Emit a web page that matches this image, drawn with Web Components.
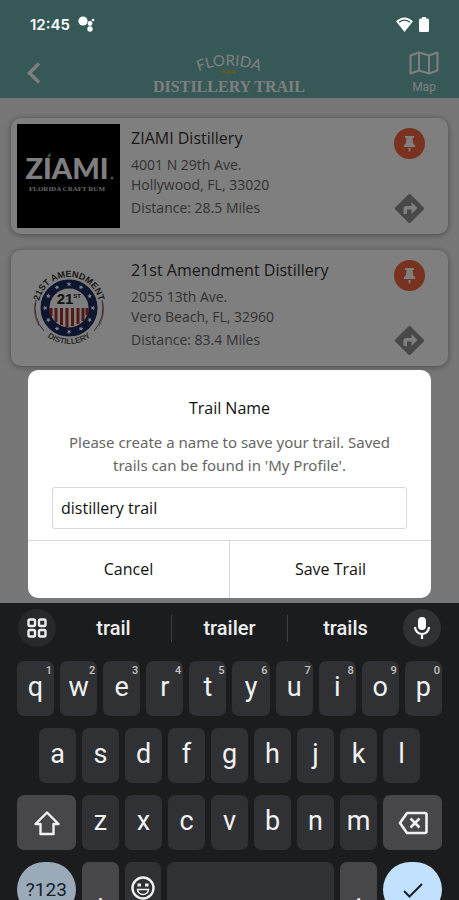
<!DOCTYPE html>
<html lang="en">
<head>
  <meta charset="UTF-8">
  <meta name="viewport" content="width=device-width, initial-scale=1">
  <title>Florida Distillery Trail</title>
  <style>
    body {
      margin: 0;
      font-family: "Open Sans", "Noto Sans", sans-serif;
    }
  </style>
</head>
<body>
  <phone-screen>
    <status-bar slot="status">12:45</status-bar>
    <trail-header></trail-header>
    <main>
      <distillery-card>
        <ziami-logo slot="logo"></ziami-logo>
        <span slot="name">ZIAMI Distillery</span>
        <span slot="street">4001 N 29th Ave.</span>
        <span slot="city">Hollywood, FL, 33020</span>
        <span slot="distance">Distance: 28.5 Miles</span>
      </distillery-card>
      <distillery-card>
        <amendment-logo slot="logo"></amendment-logo>
        <span slot="name">21st Amendment Distillery</span>
        <span slot="street">2055 13th Ave.</span>
        <span slot="city">Vero Beach, FL, 32960</span>
        <span slot="distance">Distance: 83.4 Miles</span>
      </distillery-card>
    </main>
    <name-dialog slot="dialog">
      <span slot="title">Trail Name</span>
      Please create a name to save your trail. Saved trails can be found in 'My Profile'.
    </name-dialog>
    <soft-keyboard slot="keyboard"></soft-keyboard>
  </phone-screen>

  <script>
    class PhoneScreen extends HTMLElement {
      connectedCallback() {
        this.attachShadow({ mode: 'open' });
        this.shadowRoot.innerHTML = `
          <style>
            :host {
              display: flex;
              flex-direction: column;
              height: 100vh;
              overflow: hidden;
            }
            .app {
              flex: 1;
              min-height: 0;
              position: relative;
              background: #efefef;
              overflow: hidden;
            }
            .overlay {
              position: absolute;
              inset: 0;
              display: flex;
              align-items: flex-end;
              padding: 0 28px 5px;
              background: rgba(0, 0, 0, 0.5);
            }
            .status {
              position: absolute;
              inset: 0 0 auto;
            }
            ::slotted(main) {
              display: flex;
              flex-direction: column;
              gap: 16px;
              padding: 20px 11px;
            }
            ::slotted(name-dialog) { flex: 1; }
            ::slotted(soft-keyboard) { flex: 0 0 33vh; }
          </style>
          <div class="app">
            <slot></slot>
            <div class="overlay"><slot name="dialog"></slot></div>
            <div class="status"><slot name="status"></slot></div>
          </div>
          <slot name="keyboard"></slot>
        `;
      }
    }
    customElements.define('phone-screen', PhoneScreen);

    class StatusBar extends HTMLElement {
      connectedCallback() {
        this.attachShadow({ mode: 'open' });
        this.shadowRoot.innerHTML = `
          <style>
            :host {
              display: flex;
              align-items: center;
              gap: 8px;
              height: 48px;
              padding: 0 30px;
              color: #fff;
              font: 600 15px Inter, sans-serif;
            }
            .right {
              display: flex;
              align-items: center;
              gap: 6px;
              margin-left: auto;
            }
            svg { display: block; }
          </style>
          <span><slot></slot></span>
          <svg width="17" height="16" viewBox="0 0 17 16" fill="#fff">
            <circle cx="5" cy="5" r="4.6"/>
            <circle cx="12" cy="7.5" r="2.4"/>
            <circle cx="15" cy="4" r="1.3"/>
            <circle cx="12" cy="13" r="2.7"/>
          </svg>
          <div class="right">
            <svg width="17" height="15" viewBox="0 0 17 15">
              <path d="M0 4.2Q8.5-3.4 17 4.2L8.5 15Z" fill="#fff"/>
              <path d="M3 5.2Q8.5 1 14 5.2" fill="none" stroke="#365856" stroke-width="1.3"/>
            </svg>
            <svg width="10" height="15" viewBox="0 0 10 15" fill="#fff">
              <path d="M3 0h4v1.5h1.500A1.500 1.500 0 0 1 10 3v10.500A1.500 1.500 0 0 1 8.500 15h-7A1.500 1.500 0 0 1 0 13.500V3a1.500 1.500 0 0 1 1.500-1.500H3z"/>
            </svg>
          </div>
        `;
      }
    }
    customElements.define('status-bar', StatusBar);

    class TrailHeader extends HTMLElement {
      connectedCallback() {
        this.attachShadow({ mode: 'open' });
        this.shadowRoot.innerHTML = `
          <style>
            :host {
              display: grid;
              grid-template-columns: 1fr auto 1fr;
              align-items: center;
              padding: 48px 20px 0 18px;
              height: 50px;
              background: #6cb0ac;
              color: #fff;
            }
            button, a {
              display: flex;
              flex-direction: column;
              align-items: center;
              gap: 4px;
              color: inherit;
              font: 12px/16px Roboto, sans-serif;
              text-decoration: none;
            }
            button {
              justify-self: start;
              padding: 4px 8px;
              border: 0;
              background: none;
            }
            a { justify-self: end; }
            svg { display: block; }
          </style>
          <button type="button" aria-label="Back">
            <svg width="16" height="22" viewBox="0 0 16 22" fill="none" stroke="currentColor" stroke-width="3.400">
              <path d="M13 1.500L3.500 11l9.500 9.500"/>
            </svg>
          </button>
          <svg width="152" height="46" viewBox="0 0 152 46" fill="currentColor" role="img" aria-label="Florida Distillery Trail">
            <path id="arc" d="M37 25Q76 6 115 25" fill="none"/>
            <text font-family="Lato, sans-serif" font-size="15" font-weight="400" text-anchor="middle">
              <textPath href="#arc" startOffset="50%">FLORIDA</textPath>
            </text>
            <g fill="#e6b422">
              <circle cx="71" cy="22" r="1.700"/><circle cx="76" cy="22" r="1.700"/><circle cx="81" cy="22" r="1.700"/>
            </g>
            <text x="76" y="42" font-family="'Liberation Serif', serif" font-size="16" font-weight="700" text-anchor="middle">DISTILLERY TRAIL</text>
          </svg>
          <a href="#map">
            <svg width="30" height="24" viewBox="0 0 30 24" fill="none" stroke="currentColor" stroke-width="2" stroke-linejoin="round">
              <path d="M1.500 4.500L10 1.500l10 3 8.500-3v18L20 22.500l-10-3-8.500 3zM10 1.500v18M20 4.500v18"/>
            </svg>
            Map
          </a>
        `;
      }
    }
    customElements.define('trail-header', TrailHeader);

    class DistilleryCard extends HTMLElement {
      connectedCallback() {
        this.attachShadow({ mode: 'open' });
        this.shadowRoot.innerHTML = `
          <style>
            :host {
              display: flex;
              gap: 11px;
              padding: 6px;
              border-radius: 10px;
              background: #fff;
              box-shadow: 0 1px 6px rgba(0, 0, 0, 0.4);
              color: #666;
              font-size: 14px;
              line-height: 20px;
            }
            .logo {
              width: 103px;
              height: 104px;
            }
            .info {
              flex: 1;
              display: flex;
              flex-direction: column;
            }
            h2 {
              margin: 4px 0 7px;
              color: #333;
              font-size: 16px;
              font-weight: 500;
              line-height: 20px;
            }
            p { margin: 0; }
            .distance { margin-top: 3px; }
            .actions {
              display: flex;
              flex-direction: column;
              justify-content: space-between;
              padding: 4px 17px 4px 0;
            }
            button {
              display: block;
              padding: 0;
              border: 0;
              background: none;
            }
            svg { display: block; }
          </style>
          <div class="logo"><slot name="logo"></slot></div>
          <div class="info">
            <h2><slot name="name"></slot></h2>
            <p><slot name="street"></slot></p>
            <p><slot name="city"></slot></p>
            <p class="distance"><slot name="distance"></slot></p>
          </div>
          <div class="actions">
            <button type="button" aria-label="Pin">
              <svg width="31" height="31" viewBox="0 0 31 31">
                <circle cx="15.500" cy="15.500" r="15.500" fill="#f2643f"/>
                <path d="M11 8h9v2h-1.500l.5 5 2.200 2.500V19H9.800v-1.500L12 15l.5-5H11zM14.500 20h2v2.500l-1 1.500-1-1.500z" fill="#fff"/>
              </svg>
            </button>
            <button type="button" aria-label="Directions">
              <svg width="31" height="31" viewBox="0 0 31 31">
                <path d="M14.300 1.500a1.700 1.700 0 0 1 2.400 0l12.800 12.800a1.700 1.700 0 0 1 0 2.400L16.700 29.500a1.700 1.700 0 0 1-2.400 0L1.500 16.700a1.700 1.700 0 0 1 0-2.400z" fill="#909090"/>
                <path d="M9.500 21v-5q0-3 3-3h5V9l6 6-6 6v-4.500h-4.500V21z" fill="#fff"/>
              </svg>
            </button>
          </div>
        `;
      }
    }
    customElements.define('distillery-card', DistilleryCard);

    class ZiamiLogo extends HTMLElement {
      connectedCallback() {
        this.attachShadow({ mode: 'open' });
        this.shadowRoot.innerHTML = `
          <style>
            :host { display: block; background: #000; }
            svg { display: block; width: 100%; }
          </style>
          <svg viewBox="0 0 103 104" fill="#fff" text-anchor="middle">
            <text x="50" y="55" font-family="Lato, sans-serif" font-size="29" font-weight="900">ZIAMI</text>
            <path d="M30 34l1-3 3-2-.5 3.500z" fill="#2fc79a"/>
            <circle cx="95" cy="54" r="1.500" fill="#999"/>
            <text x="50" y="67" font-family="'Liberation Serif', serif" font-size="7" font-weight="700" fill="#ccc">FLORIDA CRAFT RUM</text>
          </svg>
        `;
      }
    }
    customElements.define('ziami-logo', ZiamiLogo);

    class AmendmentLogo extends HTMLElement {
      connectedCallback() {
        // twelve stars spread evenly round the blue ring
        const stars = Array.from({ length: 12 }, (_, i) =>
          `<path transform="translate(52 52) rotate(${i * 30}) translate(0 -24)" d="M0-2.400L.7-.8l1.700.1L1.100.5l.4 1.700L0 1.300l-1.500.9.4-1.700L-2.400-.7l1.700-.1z"/>`
        ).join('');
        this.attachShadow({ mode: 'open' });
        this.shadowRoot.innerHTML = `
          <style>
            :host { display: block; }
            svg { display: block; width: 100%; }
          </style>
          <svg viewBox="0 0 103 104" text-anchor="middle" font-family="'Liberation Sans Narrow', 'Liberation Sans', sans-serif">
            <path id="top" d="M22 46A30.500 30.500 0 0 1 82 46" fill="none"/>
            <path id="bottom" d="M26 77A36 36 0 0 0 78 77" fill="none"/>
            <circle cx="52" cy="52" r="24" fill="#fff" stroke="#1d2c5e" stroke-width="9"/>
            <g fill="#fff">${stars}</g>
            <path d="M34 52v8M39 52v14M44.500 52v17M50 52v19M55.500 52v18M61 52v16M66 52v13M70 52v7" stroke="#a8322c" stroke-width="3"/>
            <text x="48" y="48" font-size="15" font-weight="700" fill="#222">21</text>
            <text x="60" y="42" font-size="6" font-weight="700" fill="#222">ST</text>
            <text font-size="9" font-weight="700" fill="#333"><textPath href="#top" startOffset="50%">21ST AMENDMENT</textPath></text>
            <text font-size="8" font-weight="700" fill="#555"><textPath href="#bottom" startOffset="50%">DISTILLERY</textPath></text>
            <path d="M19 44a34 34 0 0 0 8 31M85 44a34 34 0 0 1-8 31" fill="none" stroke="#1d2c5e" stroke-width=".8"/>
            <path d="M18 47a34 34 0 0 0 4 23M86 47a34 34 0 0 1-4 23" fill="none" stroke="#b5625c" stroke-width=".8"/>
          </svg>
        `;
      }
    }
    customElements.define('amendment-logo', AmendmentLogo);

    class NameDialog extends HTMLElement {
      connectedCallback() {
        this.attachShadow({ mode: 'open' });
        this.shadowRoot.innerHTML = `
          <style>
            :host {
              display: block;
              border-radius: 10px;
              background: #fff;
              color: #111;
              font-size: 16px;
              text-align: center;
            }
            .body { padding: 26px 24px 11px; }
            label {
              display: block;
              font-weight: 500;
              line-height: 24px;
            }
            p {
              margin: 11px 0 10px;
              color: #666;
              font-family: "Noto Sans", sans-serif;
              font-size: 15px;
              line-height: 23px;
            }
            input {
              box-sizing: border-box;
              width: 100%;
              height: 42px;
              padding: 0 8px;
              border: 1px solid #d8d8d8;
              border-radius: 3px;
              color: inherit;
              font: 500 16px "Open Sans", sans-serif;
              outline: none;
            }
            .buttons {
              display: flex;
              border-top: 1px solid #d8d8d8;
            }
            button {
              flex: 1;
              height: 57px;
              padding: 0 0 2px;
              border: 0;
              background: none;
              color: inherit;
              font: 500 16px "Open Sans", sans-serif;
            }
            button + button { border-left: 1px solid #d8d8d8; }
          </style>
          <div class="body">
            <label for="name"><slot name="title"></slot></label>
            <p><slot></slot></p>
            <input id="name" type="text" value="distillery trail">
          </div>
          <div class="buttons">
            <button type="button">Cancel</button>
            <button type="button">Save Trail</button>
          </div>
        `;
      }
    }
    customElements.define('name-dialog', NameDialog);

    class KeyCap extends HTMLElement {
      connectedCallback() {
        const hint = this.getAttribute('hint') || '';
        this.attachShadow({ mode: 'open' });
        this.shadowRoot.innerHTML = `
          <style>
            :host {
              display: block;
              flex: 37 1 0;
              min-width: 0;
              --key: #303134;
            }
            :host([wide]) { flex-grow: 59; }
            :host([space]) { flex-grow: 168; }
            :host([tone="light"]) { --key: #474749; }
            :host([tone="mode"]) { --key: #9aaab8; --ink: #17212b; }
            :host([tone="enter"]) { --key: #c2e0ff; --ink: #17212b; }
            button {
              position: relative;
              display: flex;
              align-items: center;
              justify-content: center;
              width: 100%;
              height: 55px;
              padding: 0 0 4px;
              border: 0;
              border-radius: 7px;
              background: var(--key);
              color: var(--ink, #f1f1f1);
              font: 27px Roboto, sans-serif;
            }
            :host([wide]) button { padding: 0; }
            :host([tone="mode"]) button, :host([tone="enter"]) button { border-radius: 28px; }
            :host([tone="mode"]) button { font-size: 19px; }
            :host([low]) button { padding: 4px 0 0; }
            small {
              position: absolute;
              top: 3px;
              right: 2px;
              color: #c4c4c4;
              font: 500 11px/13px Roboto, sans-serif;
            }
          </style>
          <button type="button" aria-label="${this.getAttribute('label') || this.textContent}"><slot></slot>${hint && `<small>${hint}</small>`}</button>
        `;
      }
    }
    customElements.define('key-cap', KeyCap);

    class SoftKeyboard extends HTMLElement {
      connectedCallback() {
        const keys = (letters) => [...letters].map((l) => `<key-cap>${l}</key-cap>`).join('');
        const top = [...'qwertyuiop'].map((l, i) => `<key-cap hint="${(i + 1) % 10}">${l}</key-cap>`).join('');
        this.attachShadow({ mode: 'open' });
        this.shadowRoot.innerHTML = `
          <style>
            :host {
              display: block;
              overflow: hidden;
              background: #1b1c1e;
              color: #eee;
            }
            .suggestions {
              display: flex;
              align-items: center;
              height: 50px;
              padding: 0 18px;
            }
            .suggestions button {
              border: 0;
              background: none;
              color: inherit;
              font: 500 20px Roboto, sans-serif;
            }
            .suggestions .word {
              flex: 1;
              height: 27px;
              padding: 0;
            }
            .word + .word { border-left: 1px solid #3c3d40; }
            .suggestions .round {
              display: grid;
              place-items: center;
              width: 38px;
              height: 38px;
              padding: 0;
              border-radius: 50%;
              background: #28292c;
            }
            .suggestions .mic { background: #303134; }
            .keys {
              display: flex;
              flex-direction: column;
              gap: 12px;
              padding: 8px 17px;
            }
            .row { display: flex; gap: 6px; }
            .inset { padding: 0 22px; }
            svg { display: block; }
          </style>
          <div class="suggestions">
            <button class="round" type="button" aria-label="Keyboard tools">
              <svg width="20" height="20" viewBox="0 0 20 20" fill="none" stroke="currentColor" stroke-width="2.400">
                <rect x="1.500" y="1.500" width="6.500" height="6.500" rx="1.500"/><rect x="12" y="1.500" width="6.500" height="6.500" rx="1.500"/>
                <rect x="1.500" y="12" width="6.500" height="6.500" rx="1.500"/><rect x="12" y="12" width="6.500" height="6.500" rx="1.500"/>
              </svg>
            </button>
            <button class="word" type="button">trail</button>
            <button class="word" type="button">trailer</button>
            <button class="word" type="button">trails</button>
            <button class="round mic" type="button" aria-label="Voice input">
              <svg width="18" height="24" viewBox="0 0 18 24">
                <rect x="5" y="1" width="8" height="13" rx="4" fill="#fff"/>
                <path d="M2 11a7 7 0 0 0 14 0M9 18v5" fill="none" stroke="#fff" stroke-width="2.200"/>
              </svg>
            </button>
          </div>
          <div class="keys">
            <div class="row">${top}</div>
            <div class="row inset">${keys('asdfghjkl')}</div>
            <div class="row">
              <key-cap wide tone="light" label="Shift">
                <svg width="28" height="26" viewBox="0 0 28 26" fill="none" stroke="currentColor" stroke-width="2.400" stroke-linejoin="round">
                  <path d="M14 2.500L25.500 14H20.500V24H7.500V14H2.500z"/>
                </svg>
              </key-cap>
              ${keys('zxcvbnm')}
              <key-cap wide tone="light" label="Backspace">
                <svg width="30" height="24" viewBox="0 0 30 24" fill="none" stroke="currentColor" stroke-width="2.600" stroke-linejoin="round">
                  <path d="M9 2h18q1.500 0 1.500 1.500v17q0 1.500-1.500 1.500H9L2 12zM12.500 7.500l9 9M21.500 7.500l-9 9"/>
                </svg>
              </key-cap>
            </div>
            <div class="row">
              <key-cap wide tone="mode">?123</key-cap>
              <key-cap tone="light" low>,</key-cap>
              <key-cap label="Emoji">
                <svg width="24" height="24" viewBox="0 0 24 24" fill="none" stroke="currentColor" stroke-width="2.400">
                  <circle cx="12" cy="12" r="10.500"/>
                  <path d="M6.500 13.500h11a5.500 5 0 0 1-11 0z" stroke-width="1.500"/>
                  <path d="M6.500 9h3.500M14 9h3.500" stroke-width="3"/>
                </svg>
              </key-cap>
              <key-cap space label="Space"></key-cap>
              <key-cap tone="light" low>.</key-cap>
              <key-cap wide tone="enter" label="Done">
                <svg width="22" height="18" viewBox="0 0 22 18" fill="none" stroke="currentColor" stroke-width="2">
                  <path d="M2 10l5.500 5.500L20 3"/>
                </svg>
              </key-cap>
            </div>
          </div>
        `;
      }
    }
    customElements.define('soft-keyboard', SoftKeyboard);
  </script>
</body>
</html>
